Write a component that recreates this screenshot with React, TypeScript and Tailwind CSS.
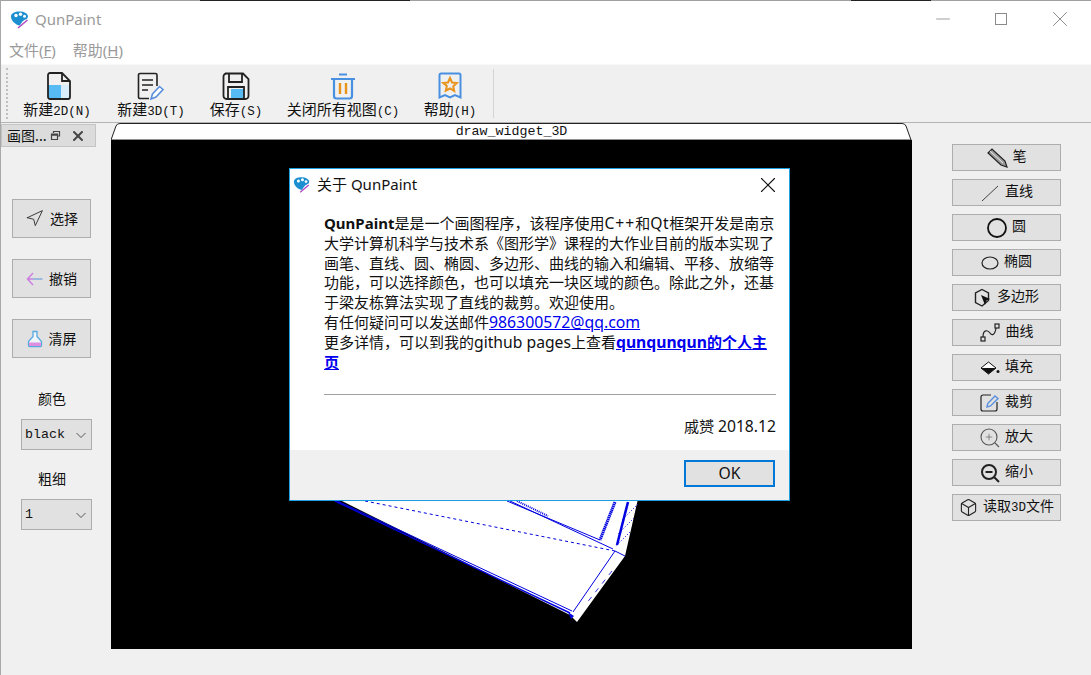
import type { ReactNode } from "react";
import { Box, Minus, Navigation, Plus, X } from "lucide-react";

const cjk = "font-['Noto_Sans_CJK_SC',sans-serif]";
const qtFont = "font-['Liberation_Mono','Noto_Sans_CJK_SC',monospace]";
const uiFont = "font-['Noto_Sans','Noto_Sans_CJK_SC',sans-serif]";

function Lat({ children }: { children: ReactNode }) {
  return <span className="text-[12.5px]">{children}</span>;
}

function Wide({ children }: { children: ReactNode }) {
  return <span className="text-[15.7px]">{children}</span>;
}

function AppLogo({ size = 20 }: { size?: number }) {
  return (
    <svg width={size} height={size} viewBox="0 0 20 20">
      <path d="M1 6.5C1 3 5 1.5 9.5 1.5S18 3.5 18 6.5c0 2.5-3 3-5 4.5-1.500 1.200-2 3.500-3.500 4.500C6 15 1 11 1 6.500z" fill="#1c8fd1" />
      <circle cx="6" cy="5.500" r="1.700" fill="#fff" />
      <circle cx="10.500" cy="4.200" r="1.700" fill="#fff" />
      <circle cx="14.500" cy="6.200" r="1.500" fill="#fff" />
      <path d="M8 18l9.500-8" stroke="#b04fc4" strokeWidth="1.600" />
    </svg>
  );
}

function ToolItem({ icon, label, className }: { icon: ReactNode; label: ReactNode; className: string }) {
  return (
    <div className={`flex flex-col items-center pt-[6px] ${className}`}>
      <div className="h-[30px] flex items-center justify-center">{icon}</div>
      <div className={`mt-[3px] text-[15px] leading-[16px] text-[#111] whitespace-nowrap ${qtFont}`}>{label}</div>
    </div>
  );
}

function SideButton({ icon, label }: { icon: ReactNode; label: string }) {
  return (
    <div className="w-[79px] h-[39px] bg-[#e1e1e1] border border-[#adadad] flex items-center justify-center gap-[6px]">
      {icon}
      <span className={`text-[14px] text-[#111] ${cjk}`}>{label}</span>
    </div>
  );
}

function RightButton({ icon, label }: { icon: ReactNode; label: ReactNode }) {
  return (
    <div className="w-[109px] h-[27px] bg-[#e1e1e1] border border-[#adadad] flex items-center justify-center gap-[5px]">
      {icon}
      <span className={`text-[14px] text-[#111] whitespace-nowrap ${qtFont}`}>{label}</span>
    </div>
  );
}

function Combo({ value }: { value: string }) {
  return (
    <div className="w-[71px] h-[31px] bg-[#e1e1e1] border border-[#adadad] flex items-center justify-between pl-[3px] pr-[4px]">
      <span className={`text-[13.300px] text-[#111] ${qtFont}`}>{value}</span>
      <svg width="12" height="12" viewBox="0 0 12 12" fill="none" stroke="#555">
        <path d="M1.500 4l4.500 4.500L10.500 4" />
      </svg>
    </div>
  );
}

function Canvas3D() {
  return (
    <svg className="absolute inset-0" width="801" height="509" viewBox="111 140 801 509">
      <polygon points="320,490 570,615 577,622 625,556 640,490" fill="#fff" />
      <g fill="none" stroke="#0000e0" strokeWidth="1">
        <path d="M335 501L570 613" strokeWidth="1.400" />
        <path d="M337.500 501L572 611" />
        <path d="M365 501L615 551" strokeDasharray="3 3" />
        <path d="M507 501L600 540" />
        <path d="M510 501L613 549" />
        <path d="M517 501L548 516" strokeDasharray="1 1" strokeWidth="2" />
        <path d="M615 502L600 540" strokeWidth="3" strokeDasharray="1.500 0.500" />
        <path d="M628 502L617 545" strokeWidth="2.500" />
        <path d="M615 551L573 612" />
        <path d="M615 551L625 556" />
        <path d="M612 571L586 604" strokeDasharray="5 6" stroke="#3030e0" />
        <path d="M638 504L622 520M634 518L618 534M630 532L616 546" strokeDasharray="1 2" />
      </g>
      <polygon points="568,612 574,616 571,619" fill="#0000e0" />
    </svg>
  );
}

function AboutDialog() {
  return (
    <div className={`absolute left-[288px] top-[168px] w-[501px] h-[333px] bg-white border border-[#1ba1e2] flex flex-col ${uiFont}`}>
      <div className="h-[31px] shrink-0 flex items-center pl-[3px] pr-[8px]">
        <AppLogo size={18} />
        <span className="ml-[6px] text-[15px] text-[#111]">关于 QunPaint</span>
        <X className="ml-auto" size={26} strokeWidth={1} color="#111" />
      </div>
      <div className="flex-1 pl-[34px] pr-[13px] pt-[14px] flex flex-col">
        <div className="text-[15px] leading-[19.800px] text-[#111] whitespace-nowrap">
          <div><b>QunPaint</b>是是一个画图程序，该程序使用<span className="text-[15.7px] tracking-[1px]">C++</span>和<span className="text-[15.7px] tracking-[0.5px]">Qt</span>框架开发是南京</div>
          <div>大学计算机科学与技术系《图形学》课程的大作业目前的版本实现了</div>
          <div>画笔、直线、圆、椭圆、多边形、曲线的输入和编辑、平移、放缩等</div>
          <div>功能，可以选择颜色，也可以填充一块区域的颜色。除此之外，还基</div>
          <div>于梁友栋算法实现了直线的裁剪。欢迎使用。</div>
          <div>有任何疑问可以发送邮件<a className="text-[#0000ee] underline text-[15.8px]">986300572@qq.com</a></div>
          <div>更多详情，可以到我的<Wide>github pages</Wide>上查看<a className="text-[#0000ee] underline font-bold"><Wide>qunqunqun</Wide>的个人主</a></div>
          <div><a className="text-[#0000ee] underline font-bold">页</a></div>
        </div>
        <div className="mt-[22px] h-px bg-[#a0a0a0]" />
        <div className="mt-[20px] text-right text-[15px] leading-[22px] text-[#111]">戚赟 <Wide>2018.12</Wide></div>
      </div>
      <div className="h-[50px] shrink-0 bg-[#f0f0f0] flex items-start justify-end pt-[10px] pr-[14px]">
        <div className="w-[91px] h-[27px] bg-[#e1e1e1] border-2 border-[#0078d7] flex items-center justify-center text-[15.700px] text-[#111]">OK</div>
      </div>
    </div>
  );
}

export default function App() {
  return (
    <div className="relative w-[1091px] h-[675px] overflow-hidden bg-[#f0f0f0] border-l border-[#a8a8a8] flex flex-col">
      <div className="h-px shrink-0 bg-[#a0a0a0] flex">
        <div className="ml-[199px] w-[210px] bg-[#222]" />
        <div className="ml-[441px] w-[80px] bg-[#222]" />
      </div>
      <div className="h-[37px] shrink-0 bg-white flex items-center pl-[9px]">
        <AppLogo />
        <span className="ml-[5px] text-[15px] text-[#9a9a9a] font-['Noto_Sans',sans-serif]">QunPaint</span>
        <div className="ml-auto -mt-[2px] flex items-center text-[#8a8a8a]">
          <Minus size={22} strokeWidth={0.900} className="mr-[41px]" />
          <div className="w-[12px] h-[12px] border border-[#8a8a8a] mr-[40px]" />
          <X size={26} strokeWidth={0.900} className="mr-[18px]" />
        </div>
      </div>
      <div className={`h-[26px] shrink-0 bg-white flex items-center gap-[17px] pl-[8px] pb-[2px] text-[15px] text-[#9a9a9a] ${uiFont}`}>
        <span>文件(<span className="underline">F</span>)</span>
        <span>帮助(<span className="underline">H</span>)</span>
      </div>
      <div className="h-[59px] shrink-0 border-t border-[#f8f8f8] border-b border-b-[#b4b4b4] flex items-stretch bg-[#f0f0f0]">
        <div className="w-[3px] ml-[5px] my-[3px] border-l-2 border-dotted border-[#c0c0c0]" />
        <ToolItem
          className="w-[94px] ml-[1px]"
          label={<>新建<Lat>2D(N)</Lat></>}
          icon={
            <svg className="ml-[4px]" width="26" height="30" viewBox="0 0 26 30">
              <path d="M2 14h13v14H4a2 2 0 0 1-2-2z" fill="#56baf5" />
              <path d="M15 14h9v12a2 2 0 0 1-2 2h-7z" fill="#d9eefc" />
              <path d="M4 2h12l8 8v16a2 2 0 0 1-2 2H4a2 2 0 0 1-2-2V4a2 2 0 0 1 2-2zM16 2v8h8" fill="none" stroke="#222" strokeWidth="1.800" />
            </svg>
          }
        />
        <ToolItem
          className="w-[94px]"
          label={<>新建<Lat>3D(T)</Lat></>}
          icon={
            <svg width="28" height="28" viewBox="0 0 28 28">
              <path d="M20 14V3a1.500 1.500 0 0 0-1.500-1.500H3A1.500 1.500 0 0 0 1.500 3v22A1.500 1.500 0 0 0 3 26.500h9" fill="none" stroke="#222" strokeWidth="1.600" />
              <path d="M5 8h11M5 13h11M5 18h6" stroke="#222" strokeWidth="1.600" />
              <path d="M14 27l1.500-5 7-7.500 3.500 3-7 7.500z" fill="#fff" stroke="#5b8fdc" strokeWidth="1.600" />
            </svg>
          }
        />
        <ToolItem
          className="w-[76px]"
          label={<>保存<Lat>(S)</Lat></>}
          icon={
            <svg width="28" height="28" viewBox="0 0 28 28">
              <path d="M9 17h13v9H9z" fill="#56baf5" />
              <path d="M3 1.500h18l5.500 5.500v17a3 3 0 0 1-3 3h-19a3 3 0 0 1-3-3V4.500a3 3 0 0 1 3-3zM7 2v8h13V2M6 27V15h16v12" fill="none" stroke="#222" strokeWidth="1.800" />
            </svg>
          }
        />
        <ToolItem
          className="w-[138px]"
          label={<>关闭所有视图<Lat>(C)</Lat></>}
          icon={
            <svg width="26" height="28" viewBox="0 0 26 28">
              <path d="M1 7h24M9 2.500h8" stroke="#4a90e2" strokeWidth="2" />
              <path d="M4 7v17a2.500 2.500 0 0 0 2.500 2.500h13A2.500 2.500 0 0 0 22 24V7" fill="none" stroke="#4a90e2" strokeWidth="2.200" />
              <path d="M10 11v11M16 11v11" stroke="#e8931c" strokeWidth="2.400" />
            </svg>
          }
        />
        <ToolItem
          className="w-[76px]"
          label={<>帮助<Lat>(H)</Lat></>}
          icon={
            <svg width="24" height="28" viewBox="0 0 24 28">
              <path d="M3 1.500h18A1.500 1.500 0 0 1 22.500 3v22.500L17 23l-5 2.500L7 23l-5.500 2.500V3A1.500 1.500 0 0 1 3 1.500z" fill="none" stroke="#4a90e2" strokeWidth="2" />
              <path d="M12 6l2 4.500 4.800.5-3.600 3.300 1 4.700L12 16.500 7.800 18.700l1-4.700L5.200 11l4.800-.5z" fill="none" stroke="#e8931c" strokeWidth="2" />
            </svg>
          }
        />
        <div className="ml-[5px] my-[4px] w-px bg-[#d4d4d4]" />
      </div>
      <div className="relative flex-1 flex">
        <div className="w-[110px] shrink-0 flex flex-col">
          <div className="mt-[1px] w-[95px] h-[23px] bg-[#dcdcdc] border border-[#c4c4c4] flex items-center pl-[5px]">
            <span className={`text-[14px] text-[#111] ${cjk}`}>画图...</span>
            <svg className="ml-[3px]" width="11" height="11" viewBox="0 0 11 11" fill="none" stroke="#444" strokeWidth="1.200">
              <path d="M3.500 3V1.500h6V6H8M1.500 4h6v5.500h-6zM1.500 5.200h6" />
            </svg>
            <X className="ml-[9px]" size={16} strokeWidth={3} color="#444" />
          </div>
          <div className="mt-[52px] pl-[11px] flex flex-col gap-[21px]">
            <SideButton icon={<Navigation size={19} strokeWidth={1.200} color="#333" />} label="选择" />
            <SideButton
              icon={
                <svg width="17" height="14" viewBox="0 0 17 14" fill="none" strokeWidth="1.400">
                  <path d="M7 1L1.500 7 7 13M2 7h5" stroke="#cc7ee0" />
                  <path d="M7 7h9.500" stroke="#7fa8dc" />
                </svg>
              }
              label="撤销"
            />
            <SideButton
              icon={
                <svg width="16" height="18" viewBox="0 0 16 18">
                  <path d="M6 1.500h4v5l4.500 5v4a1 1 0 0 1-1 1h-11a1 1 0 0 1-1-1v-4L6 6.500z" fill="#eef6fc" stroke="#5aa9e0" strokeWidth="1.300" />
                  <path d="M2 12.500h12v3.500H2z" fill="#dd8fe0" />
                </svg>
              }
              label="清屏"
            />
          </div>
          <div className="mt-[30px] pl-[20px] flex flex-col items-start">
            <div className={`w-[62px] text-center text-[14px] leading-[20px] text-[#111] ${cjk}`}>颜色</div>
            <div className="mt-[11px]"><Combo value="black" /></div>
            <div className={`mt-[18px] w-[62px] text-center text-[14px] leading-[20px] text-[#111] ${cjk}`}>粗细</div>
            <div className="mt-[11px]"><Combo value="1" /></div>
          </div>
        </div>
        <div className="w-[801px] shrink-0 flex flex-col h-[526px]">
          <div className="relative h-[17px] shrink-0 flex items-center justify-center">
            <svg className="absolute inset-0" width="801" height="17" viewBox="0 0 801 17">
              <path d="M0 17L5 3Q6 .5 9 .5H791Q794 .5 795 3L800 17z" fill="#fff" stroke="#222" />
            </svg>
            <span className={`relative text-[13.300px] leading-none text-[#111] ${qtFont}`}>draw_widget_3D</span>
          </div>
          <div className="relative flex-1 bg-black">
            <Canvas3D />
          </div>
        </div>
        <div className="pl-[40px] pt-[21px] flex flex-col gap-[8px]">
          <RightButton label="笔" icon={
            <svg width="21" height="20" viewBox="0 0 21 20">
              <path d="M1 5l4-4 13 12 2 6-6-2z" fill="#9a9a9a" stroke="#222" strokeWidth="1.200" />
              <path d="M3 3l13 12" stroke="#e8e8e8" strokeWidth="1" />
            </svg>
          } />
          <RightButton label="直线" icon={<svg width="20" height="20" viewBox="0 0 20 20"><path d="M2 18L18 3" stroke="#444" /></svg>} />
          <RightButton label="圆" icon={<svg width="20" height="20" viewBox="0 0 20 20"><circle cx="10" cy="10" r="9" fill="none" stroke="#111" strokeWidth="1.800" /></svg>} />
          <RightButton label="椭圆" icon={<svg width="18" height="14" viewBox="0 0 18 14"><ellipse cx="9" cy="7" rx="8" ry="6" fill="none" stroke="#222" strokeWidth="1.200" /></svg>} />
          <RightButton label="多边形" icon={
            <svg width="18" height="20" viewBox="0 0 18 20">
              <path d="M8 1.500l6.500 3.500v7.500L8 18 1.500 14.500V5z" fill="none" stroke="#222" strokeWidth="1.400" />
              <path d="M7 7l9 4-3.500 1.500L11 17z" fill="#111" />
            </svg>
          } />
          <RightButton label="曲线" icon={
            <svg width="21" height="20" viewBox="0 0 21 20" fill="none" stroke="#222" strokeWidth="1.200">
              <rect x="1" y="14" width="4" height="4" />
              <rect x="15" y="1" width="4" height="4" />
              <path d="M3 14C3 6 8 7 10 10s5 2 6-5" />
            </svg>
          } />
          <RightButton label="填充" icon={
            <svg width="20" height="14" viewBox="0 0 20 14">
              <path d="M8.500 1L16 7 8.500 13 1 7z" fill="#fff" stroke="#111" />
              <path d="M1 7h15l-7.500 6z" fill="#111" />
              <circle cx="18" cy="10.500" r="1.500" fill="#111" />
            </svg>
          } />
          <RightButton label="裁剪" icon={
            <svg width="20" height="20" viewBox="0 0 20 20" fill="none">
              <path d="M11 2H3a2 2 0 0 0-2 2v12a2 2 0 0 0 2 2h12a2 2 0 0 0 2-2V9" stroke="#222" strokeWidth="1.200" />
              <path d="M7 14l.7-3.500L15 3l3 2.500-7.500 7.500z" stroke="#5b8fdc" strokeWidth="1.400" />
            </svg>
          } />
          <RightButton label="放大" icon={
            <span className="relative flex">
              <svg width="20" height="20" viewBox="0 0 20 20" fill="none" stroke="#555" strokeWidth="1.100">
                <circle cx="9" cy="9" r="8" />
                <path d="M15 15l4 4" />
              </svg>
              <Plus size={10} strokeWidth={1.300} color="#444" className="absolute left-[4px] top-[4px]" />
            </span>
          } />
          <RightButton label="缩小" icon={
            <svg width="20" height="20" viewBox="0 0 20 20" fill="none" stroke="#222" strokeWidth="2">
              <circle cx="9" cy="9" r="7" />
              <path d="M14 14l5 5M5.500 9h7" />
            </svg>
          } />
          <RightButton label={<>读取<Lat>3D</Lat>文件</>} icon={<Box size={19} strokeWidth={1.400} color="#222" />} />
        </div>
      </div>
      <AboutDialog />
    </div>
  );
}
